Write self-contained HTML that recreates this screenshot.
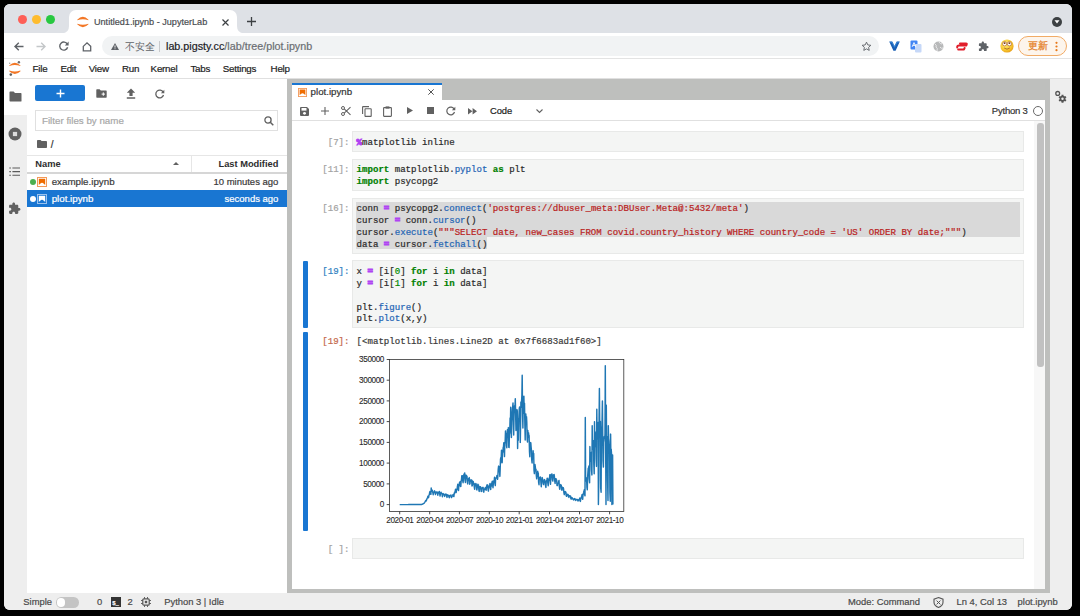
<!DOCTYPE html>
<html><head><meta charset="utf-8">
<style>
*{box-sizing:border-box;margin:0;padding:0}
html,body{width:1080px;height:616px;overflow:hidden;background:#000;font-family:"Liberation Sans",sans-serif}
.a{position:absolute}
.t{position:absolute;white-space:nowrap;line-height:1;-webkit-text-stroke:0.2px currentColor}
svg{position:absolute;overflow:visible}
#win{position:absolute;left:4px;top:4px;width:1068px;height:606px;border-radius:6px;overflow:hidden;background:#fff}
#pg{position:absolute;left:-4px;top:-4px;width:1080px;height:616px}
.mono{font-family:"Liberation Mono",monospace}
.code{font-family:"Liberation Mono",monospace;font-size:9.08px;color:#2a2a2a}
.k{color:#008000;font-weight:bold}
.o{color:#b044f2;font-weight:bold;-webkit-text-stroke:0.9px #b044f2}
.p{color:#1e64b4}
.s{color:#ba2121}
.n{color:#008800}
.prm{font-family:"Liberation Mono",monospace;font-size:9.08px;color:#a3a3a3}
.cell{position:absolute;left:352px;width:672px;background:#f4f5f4;border:1px solid #e8e9e8}
.menu{font-size:9.8px;letter-spacing:-0.25px;color:#222;top:64.4px}
.st{font-size:9.4px;color:#4a4a4a;top:596.5px}
.tick{font-size:8.2px;color:#2a2a2a;letter-spacing:-0.4px;-webkit-text-stroke:0.1px #2a2a2a}
</style></head><body>
<div id="win"><div id="pg">

<!-- ============ CHROME TAB STRIP ============ -->
<div class="a" style="left:0;top:0;width:1080px;height:33px;background:#dee1e6"></div>
<div class="a" style="left:17.7px;top:14.9px;width:9px;height:9px;border-radius:50%;background:#fe5f57"></div>
<div class="a" style="left:31.6px;top:14.9px;width:9px;height:9px;border-radius:50%;background:#febc2e"></div>
<div class="a" style="left:45.7px;top:14.9px;width:9px;height:9px;border-radius:50%;background:#28c840"></div>
<div class="a" style="left:69px;top:10px;width:168px;height:24px;background:#fff;border-radius:7px 7px 0 0"></div>
<svg style="left:0;top:0" width="300" height="34" viewBox="0 0 300 34"><path d="M62 33.2 Q69 33.2 69 26 V33.2 Z M237 26 Q237 33.2 244 33.2 H237 Z" fill="#fff"/></svg>
<!-- jupyter favicon -->
<svg style="left:72px;top:12px" width="22" height="20" viewBox="0 0 22 20"><path d="M5.2 7.8 Q10.85 1.9 16.5 7.8 L16.3 8.3 Q10.85 6.1 5.4 8.3 Z" fill="#f37726"/><path d="M5.2 12.2 Q10.85 18.1 16.5 12.2 L16.3 11.7 Q10.85 13.9 5.4 11.7 Z" fill="#f37726"/></svg>
<div class="t" style="left:94px;top:17.8px;font-size:9.1px;color:#4a4d51">Untitled1.ipynb - JupyterLab</div>
<svg style="left:221.5px;top:19px" width="7" height="7" viewBox="0 0 7 7"><path d="M0.5 0.5 L6.5 6.5 M6.5 0.5 L0.5 6.5" stroke="#3c4043" stroke-width="1.2"/></svg>
<svg style="left:246.5px;top:17px" width="9" height="9" viewBox="0 0 9 9"><path d="M4.5 0 V9 M0 4.5 H9" stroke="#3c4043" stroke-width="1.3"/></svg>
<div class="a" style="left:1051.5px;top:16.5px;width:10.5px;height:10.5px;border-radius:50%;background:#3c4043"></div>
<svg style="left:1054px;top:20px" width="6" height="4" viewBox="0 0 6 4"><path d="M0.5 0.3 L5.5 0.3 L3 3.5 Z" fill="#fff"/></svg>

<!-- ============ CHROME TOOLBAR ============ -->
<div class="a" style="left:0;top:58px;width:1080px;height:1px;background:#e3e3e3"></div>
<svg style="left:14px;top:41.5px" width="10" height="9" viewBox="0 0 10 9"><path d="M9.5 4.5 H1.2 M4.8 0.8 L1 4.5 L4.8 8.2" stroke="#5f6368" stroke-width="1.4" fill="none"/></svg>
<svg style="left:36px;top:41.5px" width="10" height="9" viewBox="0 0 10 9"><path d="M0.5 4.5 H8.8 M5.2 0.8 L9 4.5 L5.2 8.2" stroke="#c4c7c9" stroke-width="1.4" fill="none"/></svg>
<svg style="left:59px;top:41px" width="10" height="10" viewBox="0 0 10 10"><path d="M8.3 3.2 A4 4 0 1 0 8.6 6.2" stroke="#5f6368" stroke-width="1.4" fill="none"/><path d="M9.6 0.6 V4.4 H5.8 Z" fill="#5f6368"/></svg>
<svg style="left:81.5px;top:41.5px" width="10" height="10" viewBox="0 0 10 10"><path d="M1.3 4.4 L5 0.9 L8.7 4.4 V8.9 H1.3 Z" stroke="#5f6368" stroke-width="1.3" fill="none" stroke-linejoin="miter"/></svg>
<div class="a" style="left:102px;top:36px;width:777px;height:20px;border-radius:10px;background:#f1f3f4"></div>
<svg style="left:110.5px;top:42.5px" width="8" height="7" viewBox="0 0 8 7"><path d="M4 0 L8 7 H0 Z" fill="#5f6368"/><path d="M4 2.4 V4.6 M4 5.4 V6.2" stroke="#fff" stroke-width="0.9"/></svg>
<div class="t" style="left:125px;top:41.8px;font-size:9.7px;color:#5f6368;-webkit-text-stroke:0">不安全</div>
<div class="a" style="left:159px;top:41px;width:1px;height:11px;background:#c8cacc"></div>
<div class="t" style="left:166px;top:41.4px;font-size:10.75px;color:#202124">lab.pigsty.cc<span style="color:#6b6e72">/lab/tree/plot.ipynb</span></div>
<svg style="left:860.5px;top:40.5px" width="11" height="11" viewBox="0 0 24 24"><path d="M12 2.5 L14.9 8.6 L21.5 9.4 L16.6 13.9 L17.9 20.5 L12 17.2 L6.1 20.5 L7.4 13.9 L2.5 9.4 L9.1 8.6 Z" stroke="#5f6368" stroke-width="2" fill="none" stroke-linejoin="round"/></svg>
<!-- extension icons -->
<svg style="left:888.5px;top:41px" width="11" height="10" viewBox="0 0 11 10"><path d="M0.2 0.5 L3.3 0.5 L5.5 5 L7.7 0.5 L10.8 0.5 L6.6 9.8 H4.4 Z" fill="#1a5fb4"/><path d="M1.2 1.2 L3 1.2 L5.5 6.2 L8 1.2 L9.8 1.2" stroke="#3d8fe0" stroke-width="0.8" fill="none"/></svg>
<svg style="left:910px;top:39.5px" width="12" height="13" viewBox="0 0 12 13"><rect x="0.5" y="0.5" width="7" height="9" rx="1" fill="#4285f4"/><rect x="5" y="4" width="6.5" height="8.5" rx="1" fill="#c6d8f8"/><path d="M2.2 6.8 L4 2.6 L5.8 6.8 M2.8 5.4 H5.2" stroke="#fff" stroke-width="0.9" fill="none"/></svg>
<svg style="left:932.5px;top:40.5px" width="11" height="11" viewBox="0 0 11 11"><circle cx="5.5" cy="5.5" r="5" fill="#b8b9ba"/><path d="M2 3 Q4 4 3 6 Q5 7 4 10 M6 1 Q7 3 9 3 M7 6 Q8 8 10 7" stroke="#e9e9ea" stroke-width="1" fill="none"/></svg>
<svg style="left:955.5px;top:41.5px" width="12" height="9" viewBox="0 0 12 9"><path d="M4 1.4 H10 Q11.2 1.4 10.6 2.8 L10.2 3.6 H3 M2.2 7.4 H8 L8.6 6 M1.2 5.4 Q1 3.6 3 3.6" stroke="#e11d2a" stroke-width="2" fill="none" stroke-linecap="round" stroke-linejoin="round"/></svg>
<svg style="left:977.5px;top:40.5px" width="11" height="11" viewBox="0 0 24 24"><path d="M20.5 11H19V7c0-1.1-.9-2-2-2h-4V3.5C13 2.12 11.88 1 10.5 1S8 2.12 8 3.5V5H4c-1.1 0-1.99.9-1.99 2v3.8H3.5c1.49 0 2.7 1.21 2.7 2.7s-1.21 2.7-2.7 2.7H2V20c0 1.1.9 2 2 2h3.8v-1.5c0-1.49 1.21-2.7 2.7-2.7 1.49 0 2.7 1.21 2.7 2.7V22H17c1.1 0 2-.9 2-2v-4h1.5c1.38 0 2.5-1.12 2.5-2.5S21.88 11 20.5 11z" fill="#5f6368"/></svg>
<svg style="left:999.5px;top:39px" width="14" height="14" viewBox="0 0 14 14"><defs><radialGradient id="eg" cx="0.4" cy="0.35" r="0.7"><stop offset="0" stop-color="#fff07a"/><stop offset="0.7" stop-color="#f6c22c"/><stop offset="1" stop-color="#e59a18"/></radialGradient></defs><circle cx="7" cy="7" r="6.6" fill="url(#eg)"/><circle cx="4.6" cy="4.8" r="2.1" fill="#fff" stroke="#a0522d" stroke-width="0.6"/><circle cx="9.4" cy="4.8" r="2.1" fill="#fff" stroke="#a0522d" stroke-width="0.6"/><circle cx="4.6" cy="4.2" r="0.9" fill="#7a3b1a"/><circle cx="9.4" cy="4.2" r="0.9" fill="#7a3b1a"/><path d="M4.2 9 Q7 11.4 9.8 9" stroke="#9a5a2a" stroke-width="0.8" fill="none"/></svg>
<div class="a" style="left:1018px;top:36px;width:49px;height:20px;border-radius:10px;background:#fdf5ec;border:1.3px solid #f1ab66"></div>
<div class="t" style="left:1028px;top:41.3px;font-size:9.5px;color:#e5852f;-webkit-text-stroke:0.3px #e5852f">更新</div>
<svg style="left:1055px;top:40.5px" width="3" height="11" viewBox="0 0 3 11"><circle cx="1.5" cy="1.8" r="1.1" fill="#e8791a"/><circle cx="1.5" cy="5.5" r="1.1" fill="#e8791a"/><circle cx="1.5" cy="9.2" r="1.1" fill="#e8791a"/></svg>

<!-- ============ JUPYTER MENU BAR ============ -->
<div class="a" style="left:0;top:78px;width:1080px;height:1px;background:#e0e0e0"></div>
<svg style="left:4px;top:59px" width="22" height="20" viewBox="0 0 22 20">
  <path d="M5.2 6.4 Q10.85 0.9 16.5 6.4 L16.3 7 Q10.85 5.2 5.4 7 Z" fill="#f37726"/>
  <path d="M5.2 12.2 Q10.85 17.7 16.5 12.2 L16.3 11.6 Q10.85 13.4 5.4 11.6 Z" fill="#f37726"/>
  <circle cx="14.9" cy="3.2" r="1.2" fill="#6e6e6f"/><circle cx="5.7" cy="4.2" r="0.7" fill="#9e9e9e"/><circle cx="6.8" cy="15.6" r="1.3" fill="#616262"/>
</svg>
<div class="t menu" style="left:32.6px">File</div>
<div class="t menu" style="left:60.4px">Edit</div>
<div class="t menu" style="left:88.7px">View</div>
<div class="t menu" style="left:122px">Run</div>
<div class="t menu" style="left:150.6px">Kernel</div>
<div class="t menu" style="left:190.4px">Tabs</div>
<div class="t menu" style="left:222.8px">Settings</div>
<div class="t menu" style="left:270.6px">Help</div>

<!-- ============ LEFT SIDEBAR ============ -->
<div class="a" style="left:0;top:79px;width:27px;height:514px;background:#eeeeee"></div>
<div class="a" style="left:0;top:79px;width:27px;height:36px;background:#fff"></div>
<svg style="left:8.5px;top:91px" width="13" height="11" viewBox="0 0 13 11"><path d="M0.5 1.2 Q0.5 0.5 1.2 0.5 H4.6 L6 2 H11.8 Q12.5 2 12.5 2.7 V10 Q12.5 10.5 11.8 10.5 H1.2 Q0.5 10.5 0.5 9.8 Z" fill="#616161"/></svg>
<svg style="left:7.8px;top:126.8px" width="14" height="14" viewBox="0 0 14 14"><circle cx="7" cy="7" r="6.5" fill="#616161"/><rect x="4.9" y="4.9" width="4.2" height="4.2" fill="#dcdcdc"/></svg>
<svg style="left:9px;top:166.5px" width="12" height="9" viewBox="0 0 12 9"><path d="M0.3 1 H1.9 M3.4 1 H11 M0.3 4.6 H1.9 M3.4 4.6 H11 M0.3 8.2 H1.9 M3.4 8.2 H11" stroke="#5a5a5a" stroke-width="1.1"/></svg>
<svg style="left:8px;top:202px" width="13" height="13" viewBox="0 0 24 24"><path d="M20.5 11H19V7c0-1.1-.9-2-2-2h-4V3.5C13 2.12 11.88 1 10.5 1S8 2.12 8 3.5V5H4c-1.1 0-1.99.9-1.99 2v3.8H3.5c1.49 0 2.7 1.21 2.7 2.7s-1.21 2.7-2.7 2.7H2V20c0 1.1.9 2 2 2h3.8v-1.5c0-1.49 1.21-2.7 2.7-2.7 1.49 0 2.7 1.21 2.7 2.7V22H17c1.1 0 2-.9 2-2v-4h1.5c1.38 0 2.5-1.12 2.5-2.5S21.88 11 20.5 11z" fill="#616161"/></svg>

<!-- ============ FILE BROWSER ============ -->
<div class="a" style="left:27px;top:79px;width:260px;height:514px;background:#fff"></div>
<div class="a" style="left:35px;top:85px;width:50px;height:16px;background:#1976d2;border-radius:2px"></div>
<svg style="left:55.5px;top:89px" width="9" height="9" viewBox="0 0 9 9"><path d="M4.5 0.5 V8.5 M0.5 4.5 H8.5" stroke="#fff" stroke-width="1.4"/></svg>
<svg style="left:95.5px;top:89px" width="11" height="9" viewBox="0 0 11 9"><path d="M0.3 0.9 Q0.3 0.3 0.9 0.3 H3.6 L4.8 1.5 H10.1 Q10.7 1.5 10.7 2.1 V8.1 Q10.7 8.7 10.1 8.7 H0.9 Q0.3 8.7 0.3 8.1 Z" fill="#616161"/><path d="M7.3 3.4 V6.8 M5.6 5.1 H9" stroke="#fff" stroke-width="1"/></svg>
<svg style="left:125.5px;top:88px" width="10" height="11" viewBox="0 0 10 11"><path d="M5 0.5 L9.2 4.8 H6.6 V8 H3.4 V4.8 H0.8 Z" fill="#616161"/><path d="M0.8 10 H9.2" stroke="#616161" stroke-width="1.3"/></svg>
<svg style="left:154.5px;top:89px" width="10" height="10" viewBox="0 0 10 10"><path d="M8.2 3.2 A3.9 3.9 0 1 0 8.5 6" stroke="#616161" stroke-width="1.3" fill="none"/><path d="M9.3 0.8 V4.3 H5.8 Z" fill="#616161"/></svg>
<div class="a" style="left:35px;top:110px;width:243px;height:21px;border:1px solid #e0e0e0"></div>
<div class="t" style="left:42px;top:116.2px;font-size:9.75px;color:#a8a8a8">Filter files by name</div>
<svg style="left:263.5px;top:115.5px" width="10" height="10" viewBox="0 0 10 10"><circle cx="4" cy="4" r="3.1" stroke="#616161" stroke-width="1.3" fill="none"/><path d="M6.3 6.3 L9.3 9.3" stroke="#616161" stroke-width="1.5"/></svg>
<svg style="left:36.5px;top:139.5px" width="10" height="8" viewBox="0 0 10 8"><path d="M0 0.8 Q0 0 0.8 0 H3.5 L4.6 1.1 H9.2 Q10 1.1 10 1.9 V7.2 Q10 8 9.2 8 H0.8 Q0 8 0 7.2 Z" fill="#616161"/></svg>
<div class="t" style="left:50.8px;top:139.6px;font-size:10px;color:#333">/</div>
<div class="a" style="left:27px;top:155px;width:260px;height:1px;background:#e6e6e6"></div>
<div class="t" style="left:35.3px;top:159.6px;font-size:9.3px;font-weight:bold;color:#2e2e2e;-webkit-text-stroke:0">Name</div>
<svg style="left:172.5px;top:162px" width="6" height="3" viewBox="0 0 6 3"><path d="M0 3 L3 0 L6 3 Z" fill="#616161"/></svg>
<div class="a" style="left:190.5px;top:156px;width:1px;height:16px;background:#e6e6e6"></div>
<div class="t" style="right:801.6px;top:159.6px;font-size:9.3px;font-weight:bold;color:#2e2e2e;-webkit-text-stroke:0">Last Modified</div>
<div class="a" style="left:27px;top:172.3px;width:260px;height:1.4px;background:#d6d6d6"></div>
<div class="a" style="left:29.9px;top:178.7px;width:6.6px;height:6.6px;border-radius:50%;background:#4caf50"></div>
<svg style="left:37px;top:177px" width="10" height="10" viewBox="0 0 10 10"><rect x="0.5" y="0.5" width="9" height="9" fill="none" stroke="#f39a5a" stroke-width="1"/><path d="M1.8 1.8 H8.2 V8 L6.8 6.8 Q5 4.6 3.2 6.8 L1.8 8 Z" fill="#ef6c00"/></svg>
<div class="t" style="left:51.7px;top:177.3px;font-size:9.75px;color:#3a3a3a">example.ipynb</div>
<div class="t" style="right:801.6px;top:177.3px;font-size:9.5px;color:#3a3a3a">10 minutes ago</div>
<div class="a" style="left:27px;top:190.3px;width:259.5px;height:16.5px;background:#1976d2"></div>
<div class="a" style="left:29.9px;top:195.5px;width:6.6px;height:6.6px;border-radius:50%;background:#fff"></div>
<svg style="left:37px;top:194px" width="10" height="10" viewBox="0 0 10 10"><rect x="0.5" y="0.5" width="9" height="9" fill="none" stroke="#9cc3ee" stroke-width="1"/><path d="M1.8 1.8 H8.2 V8 L6.8 6.8 Q5 4.6 3.2 6.8 L1.8 8 Z" fill="#fff"/></svg>
<div class="t" style="left:51.7px;top:194px;font-size:9.75px;color:#fff">plot.ipynb</div>
<div class="t" style="right:801.6px;top:194px;font-size:9.5px;color:#fff">seconds ago</div>

<!-- ============ MAIN AREA ============ -->
<div class="a" style="left:287px;top:79px;width:763px;height:514px;background:#bebfbd"></div>
<div class="a" style="left:292px;top:83px;width:150px;height:18px;background:#fff"></div>
<div class="a" style="left:292px;top:83px;width:150px;height:2px;background:#1976d2"></div>
<div class="a" style="left:292px;top:100px;width:753px;height:489px;background:#fff"></div>
<svg style="left:298px;top:87.5px" width="9" height="9" viewBox="0 0 10 10"><rect x="0.5" y="0.5" width="9" height="9" fill="none" stroke="#f39a5a" stroke-width="1"/><path d="M1.8 1.8 H8.2 V8 L6.8 6.8 Q5 4.6 3.2 6.8 L1.8 8 Z" fill="#ef6c00"/></svg>
<div class="t" style="left:310.6px;top:87.2px;font-size:9.7px;color:#333">plot.ipynb</div>
<svg style="left:427.5px;top:89px" width="6" height="6" viewBox="0 0 6 6"><path d="M0.3 0.3 L5.7 5.7 M5.7 0.3 L0.3 5.7" stroke="#555" stroke-width="1"/></svg>
<div class="a" style="left:292px;top:120px;width:753px;height:1px;background:#e0e0e0"></div>
<!-- notebook toolbar icons -->
<svg style="left:299.5px;top:106.5px" width="9" height="9" viewBox="0 0 9 9"><path d="M0 1 Q0 0 1 0 H7 L9 2 V8 Q9 9 8 9 H1 Q0 9 0 8 Z" fill="#616161"/><rect x="1.5" y="1" width="5" height="2.6" fill="#fff"/><circle cx="4.5" cy="6.3" r="1.4" fill="#fff"/></svg>
<svg style="left:321px;top:107px" width="8" height="8" viewBox="0 0 8 8"><path d="M4 0 V8 M0 4 H8" stroke="#616161" stroke-width="1.1"/></svg>
<svg style="left:341px;top:106px" width="10" height="10" viewBox="0 0 10 10"><circle cx="2" cy="8" r="1.5" stroke="#616161" stroke-width="1" fill="none"/><circle cx="2" cy="2" r="1.5" stroke="#616161" stroke-width="1" fill="none"/><path d="M3.2 2.8 L9.5 8.8 M3.2 7.2 L9.5 1.2" stroke="#616161" stroke-width="1.1"/></svg>
<svg style="left:362px;top:105.5px" width="10" height="11" viewBox="0 0 10 11"><path d="M0.6 8 V1.2 Q0.6 0.6 1.2 0.6 H7" stroke="#616161" stroke-width="1.1" fill="none"/><rect x="3" y="2.8" width="6.2" height="7.6" rx="0.5" stroke="#616161" stroke-width="1.1" fill="none"/></svg>
<svg style="left:383px;top:105.5px" width="9" height="11" viewBox="0 0 9 11"><rect x="0.6" y="1.6" width="7.8" height="8.8" rx="0.6" stroke="#616161" stroke-width="1.1" fill="none"/><rect x="2.6" y="0.4" width="3.8" height="2.2" fill="#616161"/></svg>
<svg style="left:406.5px;top:107.3px" width="6" height="7" viewBox="0 0 6 7"><path d="M0 0 L6 3.5 L0 7 Z" fill="#616161"/></svg>
<div class="a" style="left:426.5px;top:107.3px;width:7px;height:7px;background:#616161"></div>
<svg style="left:446px;top:106px" width="10" height="10" viewBox="0 0 10 10"><path d="M8.2 3.2 A3.9 3.9 0 1 0 8.5 6" stroke="#616161" stroke-width="1.2" fill="none"/><path d="M9.3 0.8 V4.3 H5.8 Z" fill="#616161"/></svg>
<svg style="left:467.5px;top:107.5px" width="9" height="6.5" viewBox="0 0 9 6.5"><path d="M0 0 L4.4 3.25 L0 6.5 Z M4.6 0 L9 3.25 L4.6 6.5 Z" fill="#616161"/></svg>
<div class="t" style="left:489.9px;top:105.5px;font-size:9.4px;color:#222">Code</div>
<svg style="left:535.5px;top:108.5px" width="7" height="4" viewBox="0 0 7 4"><path d="M0.5 0.5 L3.5 3.5 L6.5 0.5" stroke="#616161" stroke-width="1.1" fill="none"/></svg>
<div class="t" style="left:991.8px;top:106.2px;font-size:9.5px;letter-spacing:-0.2px;color:#333">Python 3</div>
<div class="a" style="left:1033px;top:105.6px;width:10px;height:10px;border-radius:50%;border:1.5px solid #6a6a6a"></div>

<!-- scrollbar -->
<div class="a" style="left:1034px;top:121px;width:11px;height:468px;background:#f7f7f7"></div>
<div class="a" style="left:1037px;top:123px;width:6.5px;height:244px;border-radius:3px;background:#c1c1c1"></div>

<!-- ============ CELLS ============ -->
<div class="t prm" style="right:730.5px;top:137.5px">[7]:</div>
<div class="cell" style="top:131px;height:21px"></div>
<div class="t code" style="left:356.6px;top:137.5px"><span class="o">%</span>matplotlib inline</div>

<div class="t prm" style="right:730.5px;top:164.8px">[11]:</div>
<div class="cell" style="top:158.5px;height:32.5px"></div>
<div class="t code" style="left:356.6px;top:165.0px"><span class="k">import</span> matplotlib.<span class="p">pyplot</span> <span class="k">as</span> plt</div>
<div class="t code" style="left:356.6px;top:177.0px"><span class="k">import</span> psycopg2</div>

<div class="t prm" style="right:730.5px;top:204.1px">[16]:</div>
<div class="cell" style="top:197.5px;height:56px"></div>
<div class="a" style="left:356px;top:201.6px;width:664px;height:35.5px;background:#d9d9d9"></div>
<div class="a" style="left:356px;top:237px;width:131px;height:11.7px;background:#d9d9d9"></div>
<div class="t code" style="left:356.6px;top:204.3px">conn <span class="o">=</span> psycopg2.<span class="p">connect</span>(<span class="s">'postgres://dbuser_meta:DBUser.Meta@:5432/meta'</span>)</div>
<div class="t code" style="left:356.6px;top:216.1px">cursor <span class="o">=</span> conn.<span class="p">cursor</span>()</div>
<div class="t code" style="left:356.6px;top:228.0px">cursor.<span class="p">execute</span>(<span class="s">"""SELECT date, new_cases FROM covid.country_history WHERE country_code = 'US' ORDER BY date;"""</span>)</div>
<div class="t code" style="left:356.6px;top:239.8px">data <span class="o">=</span> cursor.<span class="p">fetchall</span>()</div>

<div class="a" style="left:303px;top:260.7px;width:5px;height:67.3px;background:#1976d2;border-radius:1px"></div>
<div class="t prm" style="right:730.5px;top:266.5px;color:#307fc1">[19]:</div>
<div class="cell" style="top:260.2px;height:68px"></div>
<div class="t code" style="left:356.6px;top:266.7px">x <span class="o">=</span> [i[<span class="n">0</span>] <span class="k">for</span> i <span class="k">in</span> data]</div>
<div class="t code" style="left:356.6px;top:278.5px">y <span class="o">=</span> [i[<span class="n">1</span>] <span class="k">for</span> i <span class="k">in</span> data]</div>
<div class="t code" style="left:356.6px;top:302.9px">plt.<span class="p">figure</span>()</div>
<div class="t code" style="left:356.6px;top:314.2px">plt.<span class="p">plot</span>(x,y)</div>

<div class="a" style="left:303px;top:332px;width:5px;height:199px;background:#1976d2;border-radius:1px"></div>
<div class="t prm" style="right:730.5px;top:336.8px;color:#c4684b">[19]:</div>
<div class="t code" style="left:356.6px;top:336.8px;color:#3a3a3a">[&lt;matplotlib.lines.Line2D at 0x7f6683ad1f60&gt;]</div>

<!-- ============ CHART ============ -->
<svg style="left:0;top:0" width="1080" height="616" viewBox="0 0 1080 616">
  <rect x="389.5" y="359.5" width="234.3" height="152" fill="none" stroke="#333" stroke-width="0.8"/>
  <g stroke="#333" stroke-width="0.9">
    <path d="M389.5 504.6 h-2.8 M389.5 483.9 h-2.8 M389.5 463.1 h-2.8 M389.5 442.4 h-2.8 M389.5 421.6 h-2.8 M389.5 400.9 h-2.8 M389.5 380.2 h-2.8 M389.5 359.5 h-2.8"/>
    <path d="M399.7 511.5 v2.8 M429.7 511.5 v2.8 M459.4 511.5 v2.8 M489.3 511.5 v2.8 M519.2 511.5 v2.8 M549.5 511.5 v2.8 M579.5 511.5 v2.8 M609.6 511.5 v2.8"/>
  </g>
  <polyline points="399.7,504.6 400.0,504.6 400.4,504.6 400.7,504.6 401.0,504.6 401.3,504.6 401.7,504.6 402.0,504.6 402.3,504.6 402.7,504.6 403.0,504.6 403.3,504.6 403.6,504.6 404.0,504.6 404.3,504.6 404.6,504.6 405.0,504.6 405.3,504.6 405.6,504.6 405.9,504.6 406.3,504.6 406.6,504.6 406.9,504.6 407.3,504.6 407.6,504.6 407.9,504.6 408.2,504.6 408.6,504.5 408.9,504.5 409.2,504.5 409.6,504.5 409.9,504.5 410.2,504.5 410.5,504.5 410.9,504.5 411.2,504.5 411.5,504.5 411.9,504.5 412.2,504.5 412.5,504.5 412.8,504.5 413.2,504.5 413.5,504.5 413.8,504.5 414.2,504.5 414.5,504.5 414.8,504.5 415.1,504.5 415.5,504.5 415.8,504.5 416.1,504.5 416.5,504.5 416.8,504.5 417.1,504.5 417.4,504.5 417.8,504.5 418.1,504.5 418.4,504.5 418.8,504.5 419.1,504.5 419.4,504.5 419.7,504.5 420.1,504.5 420.4,504.5 420.7,504.5 421.1,504.5 421.4,504.5 421.7,504.5 422.0,504.3 422.4,504.2 422.7,504.0 423.0,503.8 423.4,503.7 423.7,503.5 424.0,503.4 424.3,502.9 424.7,502.4 425.0,501.9 425.3,501.4 425.7,500.6 426.0,501.1 426.3,500.7 426.6,499.7 427.0,498.7 427.3,498.0 427.6,497.8 427.9,496.2 428.3,497.8 428.6,497.5 428.9,495.6 429.3,494.6 429.6,492.8 429.9,491.6 430.2,491.8 430.6,494.1 430.9,494.3 431.2,488.0 431.6,491.3 431.9,491.1 432.2,490.1 432.5,491.5 432.9,492.7 433.2,494.7 433.5,492.6 433.9,492.4 434.2,491.4 434.5,490.8 434.8,491.6 435.2,493.5 435.5,494.5 435.8,492.6 436.2,491.9 436.5,492.4 436.8,492.7 437.1,492.0 437.5,493.7 437.8,495.2 438.1,493.1 438.5,492.3 438.8,492.2 439.1,492.9 439.4,491.5 439.8,494.3 440.1,496.0 440.4,493.4 440.8,493.2 441.1,492.2 441.4,492.8 441.7,493.3 442.1,494.6 442.4,496.7 442.7,494.4 443.1,493.6 443.4,494.2 443.7,494.0 444.0,494.5 444.4,495.7 444.7,496.4 445.0,494.8 445.4,494.1 445.7,494.7 446.0,494.4 446.3,494.3 446.7,496.4 447.0,497.4 447.3,495.1 447.7,494.8 448.0,495.2 448.3,495.2 448.6,495.8 449.0,496.9 449.3,497.7 449.6,495.7 450.0,495.5 450.3,495.8 450.6,495.8 450.9,494.9 451.3,497.5 451.6,497.6 451.9,496.2 452.3,496.0 452.6,495.6 452.9,494.7 453.2,495.2 453.6,496.4 453.9,496.5 454.2,493.1 454.6,493.6 454.9,491.8 455.2,491.3 455.5,489.3 455.9,491.9 456.2,492.5 456.5,490.3 456.9,488.9 457.2,487.7 457.5,486.1 457.8,484.3 458.2,489.7 458.5,490.5 458.8,486.3 459.2,485.1 459.5,482.6 459.8,482.1 460.1,481.7 460.5,486.5 460.8,486.4 461.1,481.5 461.5,479.3 461.8,475.8 462.1,477.0 462.4,475.8 462.8,481.0 463.1,482.7 463.4,479.8 463.8,475.0 464.1,474.0 464.4,474.1 464.7,472.9 465.1,480.5 465.4,482.5 465.7,478.2 466.1,475.1 466.4,476.9 466.7,477.8 467.0,476.2 467.4,482.3 467.7,483.9 468.0,480.2 468.4,479.9 468.7,478.4 469.0,479.5 469.3,477.6 469.7,484.3 470.0,483.7 470.3,479.9 470.7,481.3 471.0,480.2 471.3,480.7 471.6,480.0 472.0,485.9 472.3,485.8 472.6,480.9 473.0,482.4 473.3,481.7 473.6,484.0 473.9,483.4 474.3,487.2 474.6,489.2 474.9,483.9 475.3,485.7 475.6,485.7 475.9,483.5 476.2,484.2 476.6,489.4 476.9,490.0 477.2,488.0 477.6,486.2 477.9,484.2 478.2,485.2 478.5,485.1 478.9,490.1 479.2,491.4 479.5,488.8 479.8,486.8 480.2,486.9 480.5,486.8 480.8,487.5 481.2,491.3 481.5,491.4 481.8,487.9 482.1,487.9 482.5,487.5 482.8,488.1 483.1,487.4 483.5,491.7 483.8,492.2 484.1,489.4 484.4,489.6 484.8,488.7 485.1,488.3 485.4,487.4 485.8,489.7 486.1,490.3 486.4,488.0 486.7,486.0 487.1,484.8 487.4,485.2 487.7,486.0 488.1,489.9 488.4,491.1 488.7,487.8 489.0,487.1 489.4,484.8 489.7,484.3 490.0,483.5 490.4,488.5 490.7,489.4 491.0,485.0 491.3,486.2 491.7,483.0 492.0,482.3 492.3,481.3 492.7,485.6 493.0,487.7 493.3,484.2 493.6,480.9 494.0,481.1 494.3,479.4 494.6,477.2 495.0,484.1 495.3,485.6 495.6,478.4 495.9,478.0 496.3,478.1 496.6,477.9 496.9,475.6 497.3,477.4 497.6,479.3 497.9,475.3 498.2,469.7 498.6,466.1 498.9,467.7 499.2,466.8 499.6,472.4 499.9,476.4 500.2,468.5 500.5,459.2 500.9,457.5 501.2,457.6 501.5,450.3 501.9,462.8 502.2,462.3 502.5,450.4 502.8,452.1 503.2,447.5 503.5,446.7 503.8,442.8 504.2,450.6 504.5,456.6 504.8,442.6 505.1,442.9 505.5,430.9 505.8,438.0 506.1,433.2 506.5,445.7 506.8,447.7 507.1,438.2 507.4,429.7 507.8,430.6 508.1,431.4 508.4,427.6 508.8,447.3 509.1,447.4 509.4,434.7 509.7,433.1 510.1,417.9 510.4,426.5 510.7,407.2 511.1,430.3 511.4,437.5 511.7,422.5 512.0,415.5 512.4,409.2 512.7,406.5 513.0,403.0 513.4,424.6 513.7,435.0 514.0,417.0 514.3,406.3 514.7,405.6 515.0,406.7 515.3,398.8 515.7,417.4 516.0,430.5 516.3,411.5 516.6,411.9 517.0,409.6 517.3,411.2 517.6,448.6 518.0,431.6 518.3,440.2 518.6,420.3 518.9,417.8 519.3,408.4 519.6,406.9 519.9,410.2 520.3,442.4 520.6,423.4 520.9,402.1 521.2,407.4 521.6,400.7 521.9,394.9 522.2,375.3 522.6,415.8 522.9,428.0 523.2,402.1 523.5,399.7 523.9,396.2 524.2,413.3 524.5,403.3 524.9,425.7 525.2,440.0 525.5,415.9 525.8,413.9 526.2,422.3 526.5,416.6 526.8,422.4 527.2,439.3 527.5,442.0 527.8,430.4 528.1,437.2 528.5,432.6 528.8,435.0 529.1,435.6 529.5,451.8 529.8,456.8 530.1,442.5 530.4,448.9 530.8,442.7 531.1,446.8 531.4,449.9 531.7,459.7 532.1,463.0 532.4,455.2 532.7,458.7 533.1,450.8 533.4,455.3 533.7,453.5 534.0,470.1 534.4,473.6 534.7,468.8 535.0,464.5 535.4,467.5 535.7,470.8 536.0,469.2 536.3,475.4 536.7,478.8 537.0,475.8 537.3,475.9 537.7,471.3 538.0,474.4 538.3,473.0 538.6,482.1 539.0,484.7 539.3,477.6 539.6,478.4 540.0,479.3 540.3,476.9 540.6,477.6 540.9,482.5 541.3,486.7 541.6,479.4 541.9,481.8 542.3,477.6 542.6,480.0 542.9,479.5 543.2,483.8 543.6,484.6 543.9,482.2 544.2,482.1 544.6,479.6 544.9,481.4 545.2,481.0 545.5,485.6 545.9,487.4 546.2,482.4 546.5,481.0 546.9,479.7 547.2,478.2 547.5,478.7 547.8,482.9 548.2,485.7 548.5,480.1 548.8,480.4 549.2,478.1 549.5,479.5 549.8,474.8 550.1,481.2 550.5,484.3 550.8,477.8 551.1,474.6 551.5,476.9 551.8,474.0 552.1,474.2 552.4,479.8 552.8,481.1 553.1,477.5 553.4,476.5 553.8,474.7 554.1,474.5 554.4,476.5 554.7,480.6 555.1,483.4 555.4,478.8 555.7,479.3 556.1,478.8 556.4,481.1 556.7,480.2 557.0,485.5 557.4,485.6 557.7,483.1 558.0,483.1 558.4,482.9 558.7,481.1 559.0,480.5 559.3,486.2 559.7,489.2 560.0,485.9 560.3,485.6 560.7,484.6 561.0,486.5 561.3,485.3 561.6,490.0 562.0,490.2 562.3,487.1 562.6,488.1 563.0,488.7 563.3,487.7 563.6,489.2 563.9,492.6 564.3,494.6 564.6,491.8 564.9,491.7 565.3,491.6 565.6,493.0 565.9,492.1 566.2,495.6 566.6,496.3 566.9,494.8 567.2,494.2 567.6,494.6 567.9,495.2 568.2,494.6 568.5,496.9 568.9,497.4 569.2,496.0 569.5,495.7 569.9,495.7 570.2,496.2 570.5,495.9 570.8,498.4 571.2,499.2 571.5,497.5 571.8,498.4 572.2,497.8 572.5,498.3 572.8,498.8 573.1,499.4 573.5,499.9 573.8,499.0 574.1,498.8 574.5,498.6 574.8,499.4 575.1,498.9 575.4,500.1 575.8,500.4 576.1,499.5 576.4,499.4 576.8,499.4 577.1,499.4 577.4,499.4 577.7,500.4 578.1,501.0 578.4,500.2 578.7,499.8 579.1,499.4 579.4,499.4 579.7,498.1 580.0,500.6 580.4,501.4 580.7,499.1 581.0,498.0 581.4,496.9 581.7,497.2 582.0,494.7 582.3,497.9 582.7,499.2 583.0,494.8 583.3,493.3 583.6,492.7 584.0,491.3 584.3,489.7 584.6,494.5 585.0,495.7 585.3,417.5 585.6,479.7 585.9,481.0 586.3,479.7 586.6,477.9 586.9,487.1 587.3,489.8 587.6,477.1 587.9,472.7 588.2,468.5 588.6,467.9 588.9,466.1 589.2,478.8 589.6,482.8 589.9,446.6 590.2,461.3 590.5,453.2 590.9,458.0 591.2,452.5 591.5,469.9 591.9,474.9 592.2,425.8 592.5,449.2 592.8,446.9 593.2,446.4 593.5,440.8 593.8,463.7 594.2,473.7 594.5,421.7 594.8,446.5 595.1,431.8 595.5,434.5 595.8,437.9 596.1,459.0 596.5,466.4 596.8,409.2 597.1,438.8 597.4,434.4 597.8,437.8 598.1,422.5 598.4,504.6 598.8,479.7 599.1,417.5 599.4,388.5 599.7,421.9 600.1,435.7 600.4,421.5 600.7,488.0 601.1,492.2 601.4,437.6 601.7,430.0 602.0,425.2 602.4,401.0 602.7,433.9 603.0,460.4 603.4,467.1 603.7,442.3 604.0,440.0 604.3,436.5 604.7,438.3 605.0,434.0 605.3,365.7 605.7,454.9 606.0,504.6 606.3,405.1 606.6,443.1 607.0,438.8 607.3,436.6 607.6,479.7 608.0,500.5 608.3,425.8 608.6,438.3 608.9,440.9 609.3,448.4 609.6,446.7 609.9,492.2 610.3,501.3 610.6,434.1 610.9,459.0 611.2,449.1 611.6,454.9 611.9,504.6 612.2,463.1 612.6,454.9 612.9,504.6" fill="none" stroke="#1f77b4" stroke-width="1.45" stroke-linejoin="round"/>
</svg>
<div class="t tick" style="right:696px;top:356.2px">350000</div>
<div class="t tick" style="right:696px;top:376.9px">300000</div>
<div class="t tick" style="right:696px;top:397.6px">250000</div>
<div class="t tick" style="right:696px;top:418.3px">200000</div>
<div class="t tick" style="right:696px;top:439.1px">150000</div>
<div class="t tick" style="right:696px;top:459.8px">100000</div>
<div class="t tick" style="right:696px;top:480.6px">50000</div>
<div class="t tick" style="right:696px;top:501.3px">0</div>
<div class="t tick" style="left:379.9px;width:40px;text-align:center;top:517.2px">2020-01</div>
<div class="t tick" style="left:409.9px;width:40px;text-align:center;top:517.2px">2020-04</div>
<div class="t tick" style="left:439.6px;width:40px;text-align:center;top:517.2px">2020-07</div>
<div class="t tick" style="left:469.5px;width:40px;text-align:center;top:517.2px">2020-10</div>
<div class="t tick" style="left:499.4px;width:40px;text-align:center;top:517.2px">2021-01</div>
<div class="t tick" style="left:529.7px;width:40px;text-align:center;top:517.2px">2021-04</div>
<div class="t tick" style="left:559.7px;width:40px;text-align:center;top:517.2px">2021-07</div>
<div class="t tick" style="left:589.8px;width:40px;text-align:center;top:517.2px">2021-10</div>

<!-- empty cell -->
<div class="t prm" style="right:730.5px;top:544.6px">[ ]:</div>
<div class="cell" style="top:538px;height:20.6px"></div>

<!-- ============ RIGHT SIDEBAR ============ -->
<div class="a" style="left:1050px;top:79px;width:30px;height:514px;background:#eeeeee"></div>
<svg style="left:1050px;top:85px" width="22" height="22" viewBox="0 0 22 22"><circle cx="7.7" cy="8.4" r="1.9" stroke="#555" stroke-width="1.3" fill="none"/><g transform="translate(12.5 13.75)"><circle r="2.9" fill="#555"/><rect x="-1" y="-4" width="2" height="2" fill="#555" transform="rotate(0)"/><rect x="-1" y="-4" width="2" height="2" fill="#555" transform="rotate(60)"/><rect x="-1" y="-4" width="2" height="2" fill="#555" transform="rotate(120)"/><rect x="-1" y="-4" width="2" height="2" fill="#555" transform="rotate(180)"/><rect x="-1" y="-4" width="2" height="2" fill="#555" transform="rotate(240)"/><rect x="-1" y="-4" width="2" height="2" fill="#555" transform="rotate(300)"/><circle r="1.2" fill="#eeeeee"/></g></svg>

<!-- ============ STATUS BAR ============ -->
<div class="a" style="left:0;top:593px;width:1080px;height:23px;background:#eeeeee"></div>
<div class="t st" style="left:23.3px">Simple</div>
<div class="a" style="left:55.5px;top:597px;width:23px;height:10.5px;border-radius:5.25px;background:#c4c4c4"></div>
<div class="a" style="left:56.5px;top:598px;width:8.5px;height:8.5px;border-radius:50%;background:#fff"></div>
<div class="t st" style="left:97px">0</div>
<div class="a" style="left:111px;top:597px;width:10px;height:10px;background:#333"></div>
<div class="t" style="left:112.2px;top:600px;font-size:6px;color:#fff;font-weight:bold">$_</div>
<div class="t st" style="left:127.5px">2</div>
<svg style="left:141px;top:597px" width="10" height="10" viewBox="0 0 10 10"><rect x="1.8" y="1.8" width="6.4" height="6.4" rx="1" stroke="#555" stroke-width="1.2" fill="none"/><rect x="3.8" y="3.8" width="2.4" height="2.4" fill="#555"/><path d="M3.5 0 V1.8 M6.5 0 V1.8 M3.5 8.2 V10 M6.5 8.2 V10 M0 3.5 H1.8 M0 6.5 H1.8 M8.2 3.5 H10 M8.2 6.5 H10" stroke="#555" stroke-width="0.9"/></svg>
<div class="t st" style="left:164.2px">Python 3 | Idle</div>
<div class="t st" style="left:848px">Mode: Command</div>
<svg style="left:932.5px;top:596.5px" width="11" height="11" viewBox="0 0 11 11"><path d="M5.5 0.6 L10 2.2 V5.2 Q10 8.6 5.5 10.4 Q1 8.6 1 5.2 V2.2 Z" stroke="#555" stroke-width="1.1" fill="none"/><path d="M3.6 3.6 L7.4 7.4 M7.4 3.6 L3.6 7.4" stroke="#555" stroke-width="1"/></svg>
<div class="t st" style="left:956.5px">Ln 4, Col 13</div>
<div class="t st" style="left:1017.6px">plot.ipynb</div>

</div></div>
</body></html>
